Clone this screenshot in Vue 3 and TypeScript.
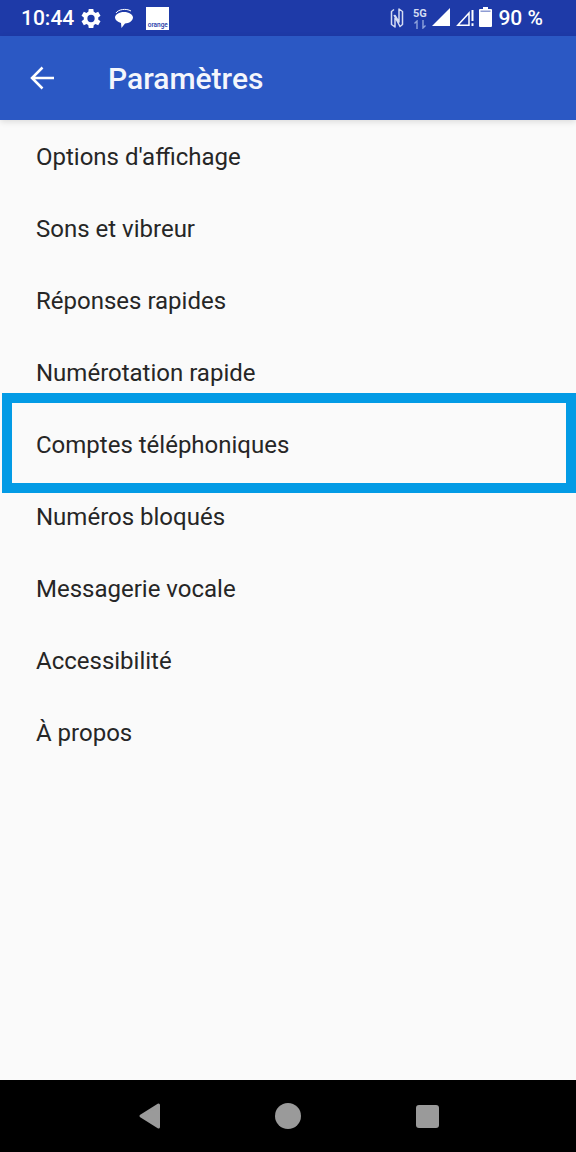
<script setup lang="ts">
const rows: string[] = [
  "Options d'affichage",
  "Sons et vibreur",
  "Réponses rapides",
  "Numérotation rapide",
  "Comptes téléphoniques",
  "Numéros bloqués",
  "Messagerie vocale",
  "Accessibilité",
  "À propos",
];
const highlighted = "Comptes téléphoniques";
</script>

<template>
  <div class="phone">
    <div class="status">
      <div class="left">
        <span class="time">10:44</span>
        <svg class="gear" width="25" height="25" viewBox="0 0 24 24">
          <path fill="#fff" d="M19.4 13a7.600 7.600 0 0 0 0-2l2.200-1.700-2.200-3.700-2.600 1a7.500 7.500 0 0 0-1.700-1L14.700 2.800h-4.400l-.4 2.800a7.500 7.500 0 0 0-1.700 1l-2.600-1-2.200 3.700L5.600 11a7.600 7.600 0 0 0 0 2l-2.200 1.700 2.200 3.700 2.600-1c.5.4 1.100.7 1.700 1l.4 2.800h4.400l.4-2.800c.6-.3 1.200-.6 1.700-1l2.600 1 2.200-3.700zM12.500 15.500a3.500 3.500 0 1 1 0-7 3.500 3.500 0 0 1 0 7z" />
        </svg>
        <svg class="bubble" width="20" height="22" viewBox="0 0 20 22">
          <path fill="none" stroke="#fff" stroke-width="1" d="M2 6c2-3.500 10-5 15-2" />
          <path fill="#fff" d="M1 10.500C1 7.500 5 5 10 5s9 2.500 9 5.500-4 6-8 6l-3.500 4.500-.5-5C3.500 15 1 13 1 10.500z" />
        </svg>
        <div class="orange"><span>orange</span></div>
      </div>
      <div class="right">
        <svg width="14" height="22" viewBox="0 0 14 22">
          <path fill="none" stroke="#d5dcf2" stroke-width="1.500" stroke-linejoin="round" d="M4 2.500 1.500 4.500v13L5 20V8.500l4 6.500V2L12.500 4.500v13L10 19.500 4 8" />
        </svg>
        <div class="net">
          <span>5G</span>
          <svg width="14" height="9" viewBox="0 0 14 9">
            <path fill="none" stroke="#8fa3dc" stroke-width="1.400" d="M4 9V1L1.500 3.500M10 0v8l2.500-2.500" />
          </svg>
        </div>
        <svg class="sig" width="20" height="20" viewBox="0 0 20 20">
          <path fill="#fff" d="M19 1v18H1z" />
        </svg>
        <svg class="sig2" width="20" height="20" viewBox="0 0 20 20">
          <path fill="none" stroke="#fff" stroke-width="1.500" d="M14 6 2.800 18.200H14z" />
          <path fill="#fff" d="M16.500 3h2v11h-2zM16.500 16.200h2v2.800h-2z" />
        </svg>
        <svg class="batt" width="13" height="22" viewBox="0 0 13 22">
          <path fill="#fff" d="M4 1h5v2h3a1 1 0 0 1 1 1v16a1 1 0 0 1-1 1H1a1 1 0 0 1-1-1V4a1 1 0 0 1 1-1h3z" />
          <path fill="#1e3aa8" opacity=".5" d="M1.500 4.500h10v1.500h-10z" />
        </svg>
        <span class="pct">90 %</span>
      </div>
    </div>

    <header class="bar">
      <svg width="24" height="24" viewBox="0 0 24 24">
        <path fill="none" stroke="#fff" stroke-width="2.500" d="M24 12H2M12.500 1.500 2 12l10.500 10.500" />
      </svg>
      <h1>Paramètres</h1>
    </header>

    <main class="list">
      <div v-for="row in rows" :key="row" class="row">
        {{ row }}
        <div v-if="row === highlighted" class="box"></div>
      </div>
    </main>

    <footer class="nav">
      <svg width="24" height="26" viewBox="0 0 24 26">
        <path fill="#9a9a9a" stroke="#9a9a9a" stroke-width="3" stroke-linejoin="round" d="M21.500 2v22L4 13z" />
      </svg>
      <div class="circle"></div>
      <div class="square"></div>
    </footer>
  </div>
</template>

<style scoped>
.phone {
  width: 576px;
  height: 1152px;
  display: flex;
  flex-direction: column;
  background: #fafafa;
  font-family: Roboto, "Noto Sans", sans-serif;
  overflow: hidden;
}

.status {
  height: 36px;
  background: #1e3aa8;
  color: #fff;
  display: flex;
  justify-content: space-between;
  align-items: center;
  padding: 0 33px 0 21px;
}

.left,
.right {
  display: flex;
  align-items: center;
}

.time {
  font-size: 21px;
  font-weight: 500;
}

.gear {
  margin-left: 4px;
}

.bubble {
  margin-left: 11px;
}

.orange {
  width: 23px;
  height: 23px;
  margin-left: 12px;
  background: #fff;
  display: flex;
  align-items: flex-end;
  justify-content: center;
  overflow: hidden;
}

.orange span {
  font-size: 6.500px;
  line-height: 9px;
  font-weight: 500;
  color: #1e3aa8;
}

.net {
  display: flex;
  flex-direction: column;
  align-items: center;
  margin-left: 8px;
  width: 16px;
}

.net span {
  font-size: 11px;
  line-height: 12px;
  font-weight: 700;
  color: #d5dcf2;
}

.sig {
  margin: 0 0 2px 3.500px;
}

.sig2 {
  margin: 0 0 2px 4px;
}

.batt {
  margin: 0 0 2px 4px;
}

.pct {
  font-size: 21px;
  font-weight: 500;
  margin-left: 6px;
}

.bar {
  height: 84px;
  background: #2b58c4;
  color: #fff;
  display: flex;
  align-items: center;
  padding-left: 30px;
  box-shadow: 0 2px 6px rgba(0, 0, 0, 0.12);
  z-index: 1;
}

.bar h1 {
  margin: 0 0 0 54px;
  font-size: 30px;
  font-weight: 500;
  color: #f4f6fc;
}

.list {
  flex: 1;
}

.row {
  position: relative;
  height: 72px;
  display: flex;
  align-items: center;
  padding: 2px 0 0 36px;
  font-size: 24px;
  color: #262626;
  box-sizing: border-box;
}

.box {
  position: absolute;
  left: 2px;
  right: 0;
  top: -15px;
  bottom: -13px;
  border: 10px solid #039be5;
}

.nav {
  height: 72px;
  background: #000;
  display: grid;
  grid-template-columns: 24px 26px 24px;
  justify-content: center;
  column-gap: 114px;
  align-items: center;
  justify-items: center;
}

.circle {
  width: 26px;
  height: 26px;
  border-radius: 50%;
  background: #9a9a9a;
}

.square {
  width: 23px;
  height: 23px;
  justify-self: start;
  margin-left: 1px;
  border-radius: 3px;
  background: #9a9a9a;
}
</style>
